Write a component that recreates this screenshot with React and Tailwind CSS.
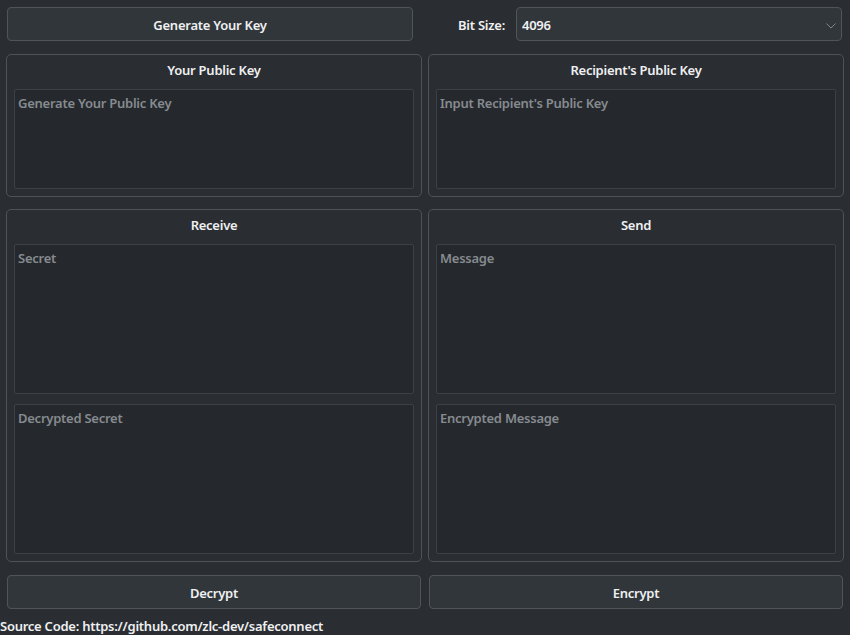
import React, { useState } from 'react';

const font = { fontFamily: '"Noto Sans", "Open Sans", sans-serif' };

const Area = ({ placeholder, h }) => (
  <textarea
    placeholder={placeholder}
    className={`block w-full ${h} resize-none rounded-[2px] border border-[#3d4146] bg-[#25282c] px-[3px] py-[4px] text-[13px] font-semibold tracking-[-0.25px] text-[#eff0f1] placeholder-[#868b90] outline-none`}
  />
);

const Group = ({ title, children, h }) => (
  <div className={`flex ${h} w-[416px] flex-col rounded-[5px] border border-[#4e5358] px-[7px] pb-[7px] pt-[5px]`}>
    <div className="mb-[9px] h-[20px] text-center text-[13px] font-semibold leading-[20px] tracking-[-0.25px] text-[#eff0f1]">{title}</div>
    <div className="flex flex-1 flex-col gap-[10px]">{children}</div>
  </div>
);

const Btn = ({ children, w }) => (
  <button className={`${w} h-[34px] rounded-[4px] border border-[#50555a] bg-[#31363b] pt-[3px] text-[13px] font-semibold tracking-[-0.25px] text-[#eff0f1]`}>
    {children}
  </button>
);

export default function App() {
  const [bits] = useState('4096');
  return (
    <div className="h-[635px] w-[850px] overflow-hidden bg-[#2a2d31]" style={font}>
      <div className="flex items-center pt-[7px]">
        <div className="ml-[7px]">
          <Btn w="w-[406px]">Generate Your Key</Btn>
        </div>
        <div className="ml-[45px] w-[48px] whitespace-nowrap pt-[3px] text-[13px] font-semibold tracking-[-0.25px] text-[#eff0f1]">Bit Size:</div>
        <div className="ml-[10px] flex h-[34px] w-[326px] items-center justify-between rounded-[4px] border border-[#50555a] bg-[#31363b] pl-[5px] pr-[5px] text-[13px] font-semibold tracking-[-0.25px] text-[#eff0f1]">
          <span className="pt-[3px]">{bits}</span>
          <svg width="10" height="6" viewBox="0 0 10 6" fill="none" className="mt-[3px]">
            <path d="M0.5 0.5 L5 5 L9.5 0.5" stroke="#7f8489" strokeWidth="1" />
          </svg>
        </div>
      </div>

      <div className="mt-[13px] flex gap-[6px] pl-[6px]">
        <Group title="Your Public Key" h="h-[143px]">
          <Area placeholder="Generate Your Public Key" h="h-[100px]" />
        </Group>
        <Group title="Recipient's Public Key" h="h-[143px]">
          <Area placeholder="Input Recipient's Public Key" h="h-[100px]" />
        </Group>
      </div>

      <div className="mt-[12px] flex gap-[6px] pl-[6px]">
        <Group title="Receive" h="h-[353px]">
          <Area placeholder="Secret" h="h-[150px]" />
          <Area placeholder="Decrypted Secret" h="h-[150px]" />
        </Group>
        <Group title="Send" h="h-[353px]">
          <Area placeholder="Message" h="h-[150px]" />
          <Area placeholder="Encrypted Message" h="h-[150px]" />
        </Group>
      </div>

      <div className="mt-[13px] flex gap-[8px] pl-[7px]">
        <Btn w="w-[414px]">Decrypt</Btn>
        <Btn w="w-[414px]">Encrypt</Btn>
      </div>

      <div className="mt-[8px] text-[13px] font-semibold leading-[18px] tracking-[-0.25px] text-[#eff0f1]">
        Source Code: https://github.com/zlc-dev/safeconnect
      </div>
    </div>
  );
}
